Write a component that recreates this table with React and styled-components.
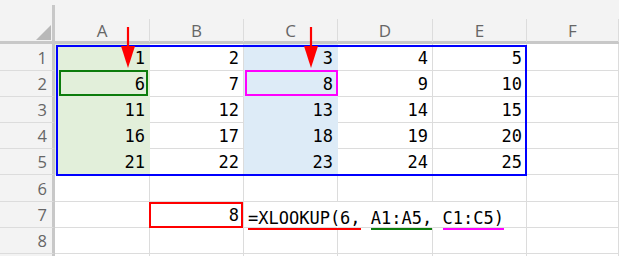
import React from 'react';
import styled, { createGlobalStyle } from 'styled-components';

const COLUMNS = '55px 95px 94px 94px 95px 94px 1fr';
const ROW_HEIGHTS = '27px 26px 26px 26px 26px 27px 26px 26px 26px';
const LETTERS = ['A', 'B', 'C', 'D', 'E', 'F'];
const GRID = '#dcdcdc';
const FILLS = { A: '#e2efda', C: '#ddebf7' };

const GlobalStyle = createGlobalStyle`
  html, body {
    margin: 0;
    padding: 0;
    background: #fff;
  }
  body {
    width: 619px;
    height: 256px;
    overflow: hidden;
  }
`;

// Red pointer arrow above a column
const Arrow = ({ left }) => (
  <ArrowSvg $left={left} width="14" height="42" viewBox="0 0 14 42">
    <line x1="7" y1="0" x2="7" y2="21" stroke="#ff0000" strokeWidth="2.2" />
    <polygon points="0,19 14,19 7,41" fill="#ff0000" />
  </ArrowSvg>
);

const rows = [1, 2, 3, 4, 5, 6, 7, 8, 9];

const App = () => {
  const renderCell = (row, col, ci) => {
    const fill = row <= 5 ? FILLS[col] : undefined;
    const key = `${col}${row}`;

    if (row <= 5) {
      const value = (row - 1) * 5 + ci + 1;
      return (
        <Cell key={key} $fill={fill}>
          {ci < 5 ? value : ''}
          {key === 'A2' && <Frame $color="#0c7c0c" $inset="-1px 1px 0 4px" />}
          {key === 'C2' && <Frame $color="#ff00ff" $inset="-1px -1px 0 1px" />}
        </Cell>
      );
    }

    if (key === 'B7') {
      return (
        <Cell key={key}>
          8
          <Frame $color="#ff0000" $inset="0 0 -1px -1px" />
        </Cell>
      );
    }

    if (key === 'C7') {
      return (
        <Cell key={key} $noRight $left>
          <Formula>
            <Segment $color="#ff0000">=XLOOKUP(6,</Segment>
            <Segment> </Segment>
            <Segment $color="#0c7c0c">A1:A5,</Segment>
            <Segment> </Segment>
            <Segment $color="#ff00ff">C1:C5)</Segment>
          </Formula>
        </Cell>
      );
    }

    return <Cell key={key} $noRight={key === 'D7'} />;
  };

  return (
    <>
      <GlobalStyle />
      <Sheet>
        <HeaderRow>
          <Corner>
            <CornerMark />
          </Corner>
          {LETTERS.map((l) => (
            <ColHeader key={l}>{l}</ColHeader>
          ))}
        </HeaderRow>

        <Body>
          {rows.map((row) => (
            <React.Fragment key={row}>
              <RowHeader>{row < 9 ? row : ''}</RowHeader>
              {LETTERS.map((col, ci) => renderCell(row, col, ci))}
            </React.Fragment>
          ))}
          <RangeBox />
        </Body>

        <Arrow left={121} />
        <Arrow left={304} />
      </Sheet>
    </>
  );
};

const Sheet = styled.div`
  position: relative;
  width: 619px;
  height: 256px;
  overflow: hidden;
  background: #fff;
`;

const HeaderRow = styled.div`
  display: grid;
  grid-template-columns: ${COLUMNS};
  height: 44px;
  box-sizing: border-box;
  background: #f3f3f3;
  border-bottom: 3px solid #c8c8c8;
`;

const Corner = styled.div`
  margin-top: 5px;
  border-right: 3px solid #c8c8c8;
  display: flex;
  justify-content: flex-end;
  align-items: flex-end;
  padding: 0 1px 2px 0;
`;

const CornerMark = styled.div`
  width: 15px;
  height: 15px;
  background: #b8b8b8;
  clip-path: polygon(100% 0, 100% 100%, 0 100%);
`;

const ColHeader = styled.div`
  margin-top: 19px;
  border-right: 1px solid ${GRID};
  display: flex;
  align-items: center;
  justify-content: center;
  font-family: 'Open Sans', 'Noto Sans', sans-serif;
  font-size: 17px;
  color: #666;
`;

const Body = styled.div`
  position: relative;
  display: grid;
  grid-template-columns: ${COLUMNS};
  grid-template-rows: ${ROW_HEIGHTS};
`;

const RowHeader = styled.div`
  background: #f3f3f3;
  border-right: 3px solid #c8c8c8;
  border-bottom: 1px solid ${GRID};
  display: flex;
  justify-content: flex-end;
  align-items: flex-end;
  padding: 0 5px 2px 0;
  font-family: 'Open Sans', 'Noto Sans', sans-serif;
  font-size: 16.5px;
  line-height: 20px;
  color: #666;
`;

const Cell = styled.div`
  position: relative;
  background: ${(p) => p.$fill || '#fff'};
  border-right: 1px solid ${(p) => (p.$noRight ? 'transparent' : p.$fill || GRID)};
  border-bottom: 1px solid ${(p) => p.$fill || GRID};
  display: flex;
  align-items: flex-end;
  justify-content: ${(p) => (p.$left ? 'flex-start' : 'flex-end')};
  padding: ${(p) => (p.$left ? '0 0 2px 4px' : '0 4px 2px 0')};
  font-family: 'DejaVu Sans Mono', 'Liberation Mono', monospace;
  font-size: 17px;
  line-height: 20px;
  color: #000;
  white-space: nowrap;
  overflow: visible;
  z-index: ${(p) => (p.$left ? 1 : 'auto')};
`;

const Frame = styled.div`
  position: absolute;
  inset: ${(p) => p.$inset};
  border: 2px solid ${(p) => p.$color};
  pointer-events: none;
  z-index: 2;
`;

const Formula = styled.div`
  display: flex;
  align-items: flex-end;
  margin-bottom: -5px;
`;

const Segment = styled.span`
  display: inline-block;
  white-space: pre;
  line-height: 20px;
  border-bottom: 2px solid ${(p) => p.$color || 'transparent'};
`;

const RangeBox = styled.div`
  position: absolute;
  left: 56px;
  top: 1px;
  width: 471px;
  height: 131px;
  box-sizing: border-box;
  border: 2px solid #0000ff;
  pointer-events: none;
  z-index: 3;
`;

const ArrowSvg = styled.svg`
  position: absolute;
  left: ${(p) => p.$left}px;
  top: 27px;
  z-index: 4;
`;

export default App;
